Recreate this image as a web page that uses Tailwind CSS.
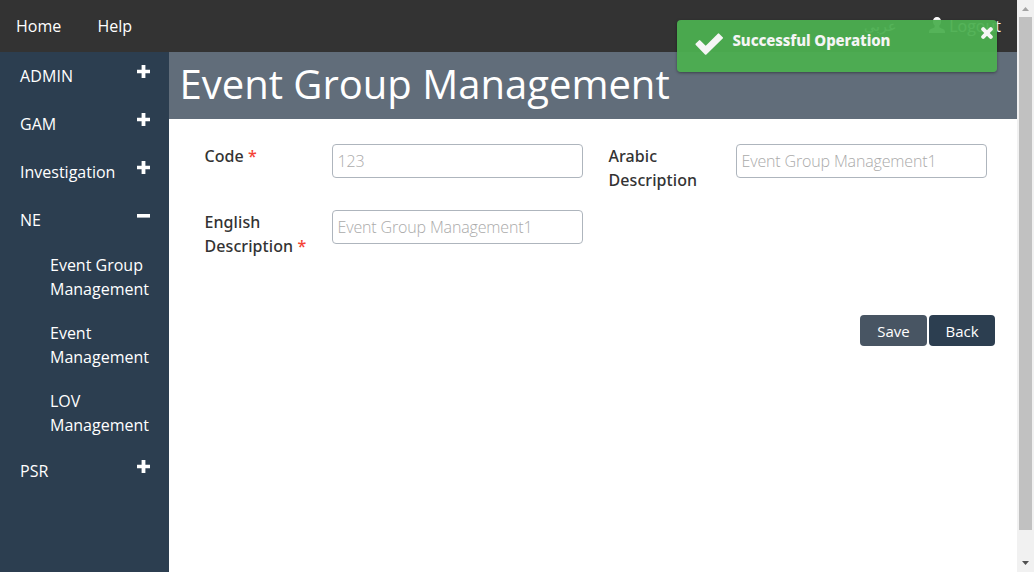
<!DOCTYPE html>
<html lang="en">
<head>
<meta charset="utf-8">
<title>Event Group Management</title>
<script src="https://cdn.jsdelivr.net/npm/@tailwindcss/browser@4"></script>
</head>
<body class="relative flex h-[572px] w-[1034px] overflow-hidden bg-white font-['Open_Sans','Noto_Sans',sans-serif] text-base leading-6 text-white">
<svg class="hidden">
  <symbol id="plus" viewBox="0 0 13 13"><path fill="currentColor" d="M4.600 0h3.800v4.700H13v3.600H8.400V13H4.600V8.300H0V4.700h4.600z"/></symbol>
  <symbol id="minus" viewBox="0 0 13 13"><path fill="currentColor" d="M0 5h13v3.600H0z"/></symbol>
</svg>
<div class="flex w-[1017px] flex-col">
  <header class="flex h-[52px] items-center bg-[#333333] px-4">
    <a class="w-[81.5px]">Home</a>
    <a>Help</a>
    <a class="ml-auto mr-[33px] text-[14px]" lang="ar" dir="rtl">عربى</a>
    <a class="flex items-center gap-[4px]"><svg class="mb-[2px] h-4 w-4" viewBox="0 0 16 16"><path fill="currentColor" d="M8 0c2.500 0 4 1.700 4 4.300 0 1.700-.7 3.300-1.700 4.300v1.400c0 1 4.300 1.600 5.200 3.300.4.700.5 1.700.5 2.700H0c0-1 .1-2 .5-2.700.9-1.700 5.200-2.300 5.200-3.300V8.600C4.700 7.600 4 6 4 4.300 4 1.700 5.500 0 8 0z"/></svg>Logout</a>
  </header>
  <div class="flex flex-1">
    <nav class="w-[169px] bg-[#2c3e50]">
      <div class="flex h-12 justify-between pl-5 pr-[19px] pt-3"><span class="tracking-[0.1px]">ADMIN</span><svg class="mt-[1px] h-[13px] w-[13px]"><use href="#plus"/></svg></div>
      <div class="flex h-12 justify-between pl-5 pr-[19px] pt-3"><span>GAM</span><svg class="mt-[1px] h-[13px] w-[13px]"><use href="#plus"/></svg></div>
      <div class="flex h-12 justify-between pl-5 pr-[19px] pt-3"><span>Investigation</span><svg class="mt-[1px] h-[13px] w-[13px]"><use href="#plus"/></svg></div>
      <div class="flex h-12 justify-between pl-5 pr-[19px] pt-3"><span>NE</span><svg class="mt-[1px] h-[13px] w-[13px]"><use href="#minus"/></svg></div>
      <div class="flex h-[203px] flex-col gap-5 pl-[50px] pt-[9px]">
        <a>Event Group<br>Management</a>
        <a>Event<br>Management</a>
        <a>LOV<br>Management</a>
      </div>
      <div class="flex h-12 justify-between pl-5 pr-[19px] pt-3"><span>PSR</span><svg class="mt-[1px] h-[13px] w-[13px]"><use href="#plus"/></svg></div>
    </nav>
    <main class="flex-1 text-[#333333]">
      <h1 class="h-[67px] bg-[#616d7a] pl-[10.500px] text-[40px] leading-[64px] text-white">Event Group Management</h1>
      <div class="grid grid-cols-[127px_251px_26px_127px_251px] pl-9 pt-[25px] font-['Noto_Sans',sans-serif] font-medium">
        <label class="-ml-[0.5px] tracking-[0.08px]">Code <span class="text-[#f44336]">*</span></label>
        <input class="h-[34px] rounded border border-[#aeb5bd] bg-white px-[4.5px] font-['Open_Sans',sans-serif] font-light tracking-[-0.15px] text-[#aaaaaa]" value="123">
        <span></span>
        <label class="-ml-[0.5px] tracking-[0.08px]">Arabic<br>Description</label>
        <input class="h-[34px] rounded border border-[#aeb5bd] bg-white px-[4.5px] font-['Open_Sans',sans-serif] font-light tracking-[-0.15px] text-[#aaaaaa]" value="Event Group Management1">
        <label class="-ml-[0.5px] mt-[18px] tracking-[0.08px]">English<br>Description <span class="text-[#f44336]">*</span></label>
        <input class="mt-[18px] h-[34px] rounded border border-[#aeb5bd] bg-white px-[4.5px] font-['Open_Sans',sans-serif] font-light tracking-[-0.15px] text-[#aaaaaa]" value="Event Group Management1">
      </div>
      <div class="mt-[57px] flex justify-end gap-[2px] pr-[22px] text-[15px] text-white">
        <button class="h-[31px] w-[67px] rounded bg-[#485563]">Save</button>
        <button class="h-[31px] w-[66px] rounded bg-[#2c3e50]">Back</button>
      </div>
    </main>
  </div>
</div>
<div class="flex w-[17px] flex-col items-center bg-[#f1f1f1]">
  <svg class="h-[17px] w-[17px]" viewBox="0 0 17 17"><path fill="#a3a3a3" d="M5 11h7L8.500 7z"/></svg>
  <div class="h-[513px] w-[13px] bg-[#c1c1c1]"></div>
  <svg class="mt-auto h-[17px] w-[17px]" viewBox="0 0 17 17"><path fill="#505050" d="M5 6h7l-3.500 4z"/></svg>
</div>
<div class="absolute left-[677px] top-5 flex h-[52px] w-[320px] rounded bg-[#4caf50]/95 pl-[17px] text-[#f5f5f5] shadow-[0_1px_3px_rgba(0,0,0,0.4)]">
  <svg class="mt-[13px] h-[22px] w-[30px]" viewBox="0 0 30 22"><path fill="currentColor" stroke="currentColor" stroke-width="2" stroke-linejoin="round" d="M2.500 11.200 5.600 8.100 11.700 14.200 24.500 1.400 28 4.900 11.700 20.800z"/></svg>
  <strong class="ml-[8.500px] mt-[8px] font-['Noto_Sans',sans-serif] text-[15px] font-extrabold tracking-[-0.1px]">Successful Operation</strong>
  <svg class="ml-auto mr-1 mt-[7px] h-3 w-3" viewBox="0 0 12 12"><path stroke="currentColor" stroke-width="4" stroke-linecap="round" d="m2.200 2.200 7.600 7.600m0-7.600-7.600 7.600"/></svg>
</div>
</body>
</html>
